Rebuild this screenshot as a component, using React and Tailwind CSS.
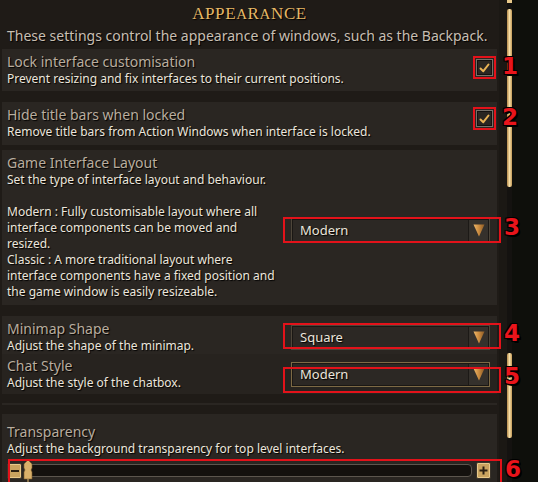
import React from 'react';

const shadow = '[text-shadow:1px_1px_1px_#000]';

const Num = ({ n, className }) => (
  <span
    className={`absolute font-['DejaVu_Sans',sans-serif] font-bold text-[23px] leading-none text-[#e8141b] [text-shadow:-1px_-1px_0_#000,1px_-1px_0_#000,-1px_1px_0_#000,1px_1px_0_#000,2px_2px_0_#000] ${className}`}
  >
    {n}
  </span>
);

const RedBox = ({ className }) => (
  <div className={`absolute border-2 border-[#e3121a] pointer-events-none ${className}`} />
);

const Check = () => (
  <div className="w-[17px] h-[17px] border border-[#77716a] bg-[#2a2622] shadow-[inset_0_0_0_1px_#141210] flex items-center justify-center">
    <svg width="11" height="10" viewBox="0 0 11 10">
      <path d="M1.5 5.5 L4.3 8.2 L9.5 1.5" fill="none" stroke="#e9b355" strokeWidth="2" strokeLinecap="round" strokeLinejoin="round" />
    </svg>
  </div>
);

const Dropdown = ({ value, gold }) => (
  <div className={`w-[199px] h-[25px] border ${gold ? 'border-[#7d6a45]' : 'border-[#4e463a]'} bg-[#2c2824] shadow-[inset_0_0_0_1px_#1a1714] flex items-stretch`}>
    <span className={`flex-1 pl-[8px] text-[13px] leading-[23px] text-[#ebe5db] ${shadow}`}>{value}</span>
    <div className="w-[20px] m-[1px] bg-[#35312c] border-l border-[#1c1916] flex items-center justify-center">
      <svg width="12" height="13" viewBox="0 0 12 13">
        <defs>
          <linearGradient id="tri" x1="0" y1="0" x2="1" y2="0">
            <stop offset="0" stopColor="#f0b86a" />
            <stop offset="0.5" stopColor="#c98a3e" />
            <stop offset="1" stopColor="#8a5a26" />
          </linearGradient>
        </defs>
        <path d="M0.5 0.5 H11.5 L6 12.5 Z" fill="url(#tri)" />
      </svg>
    </div>
  </div>
);

const Title = ({ children }) => (
  <div className={`text-[14px] leading-[18px] text-[#b9ad9e] ${shadow}`}>{children}</div>
);

const Sub = ({ children }) => (
  <div className={`text-[12px] leading-[16px] text-[#ece6dc] ${shadow}`}>{children}</div>
);

export default function App() {
  return (
    <div className="w-[538px] h-[482px] overflow-hidden flex bg-[#0e0f0b] font-['Noto_Sans',sans-serif]">
      {/* settings column */}
      <div className="w-[499px] shrink-0 bg-[#1f1b17] px-[2px] flex flex-col">
        <div className="h-[26px] flex items-center justify-center">
          <span className="font-['Liberation_Serif',serif] text-[17px] leading-none tracking-[0.6px] text-[#e6b866] [text-shadow:1px_1px_1px_#000]">
            APPE<span className="text-[15px]">A</span>R<span className="text-[15px]">A</span>NCE
          </span>
        </div>
        <div className={`pl-[5px] h-[23px] text-[14px] leading-[20px] text-[#c8bfb2] ${shadow}`}>
          These settings control the appearance of windows, such as the Backpack.
        </div>

        {/* lock */}
        <div className="relative h-[42px] bg-[#2a2622] flex items-start justify-between pl-[5px] pr-[1px] pt-[4px]">
          <div>
            <Title>Lock interface customisation</Title>
            <Sub>Prevent resizing and fix interfaces to their current positions.</Sub>
          </div>
          <div className="border-2 border-[#e3121a] p-[1px] mt-[3px]">
            <Check />
          </div>
          <Num n="1" className="left-[500px] top-[6px]" />
        </div>

        <div className="h-[11px]" />

        {/* title bars */}
        <div className="relative h-[43px] bg-[#2a2622] flex items-start justify-between pl-[5px] pr-[1px] pt-[4px]">
          <div>
            <Title>Hide title bars when locked</Title>
            <Sub>Remove title bars from Action Windows when interface is locked.</Sub>
          </div>
          <div className="border-2 border-[#e3121a] p-[1px] mt-[1px]">
            <Check />
          </div>
          <Num n="2" className="left-[500px] top-[4px]" />
        </div>

        <div className="h-[5px]" />

        {/* layout */}
        <div className="relative h-[155px] bg-[#2a2622] flex justify-between pl-[5px] pr-[7px] pt-[4px]">
          <div className="w-[276px] shrink-0">
            <Title>Game Interface Layout</Title>
            <Sub>Set the type of interface layout and behaviour.</Sub>
            <div className="h-[16px]" />
            <Sub>Modern : Fully customisable layout where all interface components can be moved and resized.</Sub>
            <Sub>Classic : A more traditional layout where interface components have a fixed position and the game window is easily resizeable.</Sub>
          </div>
          <div className="pt-[64px]">
            <Dropdown value="Modern" />
          </div>
          <RedBox className="left-[281px] top-[67px] w-[218px] h-[26px]" />
          <Num n="3" className="left-[502px] top-[66px]" />
        </div>

        <div className="h-[11px]" />

        {/* minimap */}
        <div className="relative h-[38px] bg-[#2a2622] flex items-start justify-between pl-[5px] pr-[7px] pt-[4px]">
          <div>
            <Title>Minimap Shape</Title>
            <Sub>Adjust the shape of the minimap.</Sub>
          </div>
          <div className="pt-[5px]">
            <Dropdown value="Square" />
          </div>
          <RedBox className="left-[281px] top-[7px] w-[218px] h-[26px]" />
          <Num n="4" className="left-[502px] top-[6px]" />
        </div>

        {/* chat */}
        <div className="relative h-[40px] bg-[#27231f] flex items-start justify-between pl-[5px] pr-[7px] pt-[3px]">
          <div>
            <Title>Chat Style</Title>
            <Sub>Adjust the style of the chatbox.</Sub>
          </div>
          <div className="pt-[5px]">
            <Dropdown value="Modern" gold />
          </div>
          <RedBox className="left-[281px] top-[13px] w-[218px] h-[26px]" />
          <Num n="5" className="left-[502px] top-[11px]" />
        </div>

        <div className="h-[9px]" />
        <div className="h-[2px] bg-[#2a2622]" />
        <div className="h-[9px]" />

        {/* transparency */}
        <div className="relative flex-1 bg-[#2a2622] pl-[5px] pr-[6px] pt-[9px]">
          <Title>Transparency</Title>
          <Sub>Adjust the background transparency for top level interfaces.</Sub>
          <div className="mt-[5px] flex items-center gap-[4px]">
            <div className="w-[15px] h-[16px] bg-[#c9a35f] border border-[#3a332a] rounded-[2px] flex items-center justify-center shadow-[inset_0_0_0_1px_#e8c98a]">
              <div className="w-[8px] h-[2px] bg-[#2a1f12]" />
            </div>
            <div className="relative flex-1 h-[13px] border border-[#5c564e] rounded-[4px] bg-[#14110e]">
              <svg className="absolute -left-[4px] -top-[5px]" width="10" height="22" viewBox="0 0 10 22">
                <path d="M5 0 L9 4 V8 L8 10 L9 12 V19 H1 V12 L2 10 L1 8 V4 Z" fill="#d9b06a" stroke="#7a5a2c" strokeWidth="0.6" />
                <path d="M5 19 V22" stroke="#d9b06a" strokeWidth="1" />
              </svg>
            </div>
            <div className="w-[15px] h-[17px] bg-[#c9a35f] border border-[#3a332a] rounded-[2px] flex items-center justify-center shadow-[inset_0_0_0_1px_#e8c98a]">
              <svg width="9" height="9" viewBox="0 0 9 9">
                <path d="M4.5 0.5 V8.5 M0.5 4.5 H8.5" stroke="#2a1f12" strokeWidth="2" />
              </svg>
            </div>
          </div>
          <RedBox className="left-[6px] top-[45px] w-[494px] h-[30px]" />
          <Num n="6" className="left-[503px] top-[44px]" />
        </div>
      </div>

      {/* scroll track */}
      <div className="w-[8px] shrink-0 bg-[#1b1814]" />
      <div className="w-[5px] shrink-0 bg-[#141210] flex flex-col">
        <div className="h-[3px] bg-[#e9c98a]" />
        <div className="h-[6px]" />
        <div className="h-[178px] bg-gradient-to-r from-[#b48a4a] via-[#f7dfa6] to-[#c29a58] rounded-[2px]" />
        <div className="h-[166px]" />
        <div className="h-[85px] bg-gradient-to-r from-[#b48a4a] via-[#f7dfa6] to-[#c29a58] rounded-[2px]" />
      </div>
      <div className="flex-1" />
    </div>
  );
}
